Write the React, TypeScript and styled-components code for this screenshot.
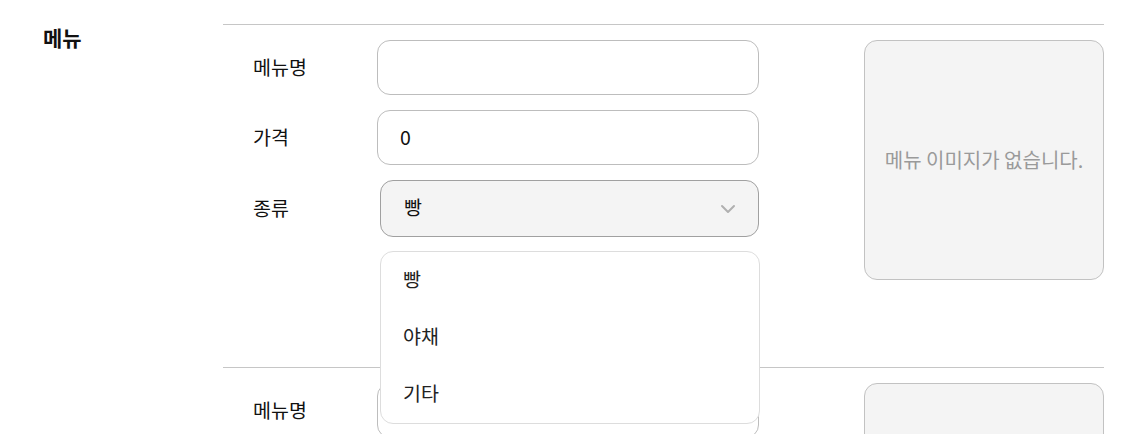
import React from 'react'
import styled, { createGlobalStyle } from 'styled-components'

const GlobalStyle = createGlobalStyle`
  body {
    margin: 0;
    background: #ffffff;
    font-family: 'Noto Sans CJK KR', 'Noto Sans', sans-serif;
    color: #111111;
  }
`

const StyledPage = styled.div`
  display: flex;
  padding: 24px 42px 0 0;
`

const StyledAside = styled.div`
  flex: 0 0 223px;
  padding-left: 43px;
  box-sizing: border-box;
`

const StyledHeading = styled.h2`
  margin: 0;
  font-size: 21px;
  font-weight: 700;
  line-height: 26px;
`

const StyledMain = styled.div`
  flex: 1 1 auto;
  display: flex;
  flex-direction: column;
`

const StyledSection = styled.section`
  display: flex;
  justify-content: space-between;
  border-top: 1px solid #c6c6c6;
  padding: 15px 0 87px;
`

const StyledForm = styled.div`
  position: relative;
  display: flex;
  flex-direction: column;
  gap: 15px;
  padding-left: 30px;
`

const StyledRow = styled.div`
  display: flex;
  align-items: center;
`

const StyledLabel = styled.label`
  flex: 0 0 124px;
  font-size: 19.5px;
  padding-bottom: 3px;
`

const StyledInput = styled.div`
  box-sizing: border-box;
  width: 382px;
  height: 55px;
  display: flex;
  align-items: center;
  padding: 0 22px 3px;
  border: 1px solid #bdbdbd;
  border-radius: 13px;
  background: #ffffff;
  font-size: 19.5px;
`

const StyledSelect = styled.div`
  box-sizing: border-box;
  width: 379px;
  height: 57px;
  margin-left: 3px;
  display: flex;
  align-items: center;
  justify-content: space-between;
  padding: 0 22px 0 23px;
  border: 1px solid #a0a0a0;
  border-radius: 13px;
  background: #f4f4f4;
  font-size: 19.5px;

  span {
    padding-bottom: 4px;
  }
`

const StyledMenu = styled.ul`
  position: absolute;
  top: 211px;
  left: 157px;
  z-index: 2;
  box-sizing: border-box;
  width: 380px;
  margin: 0;
  padding: 0;
  list-style: none;
  background: #ffffff;
  border: 1px solid #dddddd;
  border-radius: 13px;
`

const StyledMenuItem = styled.li`
  box-sizing: border-box;
  height: 57px;
  display: flex;
  align-items: center;
  padding: 0 0 4px 22px;
  font-size: 19.5px;
  color: #222222;
`

const StyledImageBox = styled.div`
  box-sizing: border-box;
  flex: 0 0 240px;
  height: 240px;
  display: flex;
  align-items: center;
  justify-content: center;
  padding-bottom: 2px;
  background: #f4f4f4;
  border: 1px solid #c2c2c2;
  border-radius: 13px;
  font-size: 20px;
  color: #9a9a9a;
  white-space: nowrap;
`

const Chevron = () => (
  <svg width="16" height="10" viewBox="0 0 16 10" fill="none">
    <path d="M2 2l6 6 6-6" stroke="#b0b0b0" strokeWidth="2" strokeLinecap="round" strokeLinejoin="round" />
  </svg>
)

const categories = ['빵', '야채', '기타']

interface MenuSectionProps {
  price: string
  category: string
  open?: boolean
}

const MenuSection = ({ price, category, open }: MenuSectionProps) => (
  <StyledSection>
    <StyledForm>
      <StyledRow>
        <StyledLabel>메뉴명</StyledLabel>
        <StyledInput />
      </StyledRow>
      <StyledRow>
        <StyledLabel>가격</StyledLabel>
        <StyledInput>{price}</StyledInput>
      </StyledRow>
      <StyledRow>
        <StyledLabel>종류</StyledLabel>
        <StyledSelect>
          <span>{category}</span>
          <Chevron />
        </StyledSelect>
      </StyledRow>
      {open && (
        <StyledMenu>
          {categories.map((c) => (
            <StyledMenuItem key={c}>{c}</StyledMenuItem>
          ))}
        </StyledMenu>
      )}
    </StyledForm>
    <StyledImageBox>메뉴 이미지가 없습니다.</StyledImageBox>
  </StyledSection>
)

export default function App() {
  return (
    <>
      <GlobalStyle />
      <StyledPage>
        <StyledAside>
          <StyledHeading>메뉴</StyledHeading>
        </StyledAside>
        <StyledMain>
          <MenuSection price="0" category="빵" open />
          <MenuSection price="0" category="빵" />
        </StyledMain>
      </StyledPage>
    </>
  )
}
